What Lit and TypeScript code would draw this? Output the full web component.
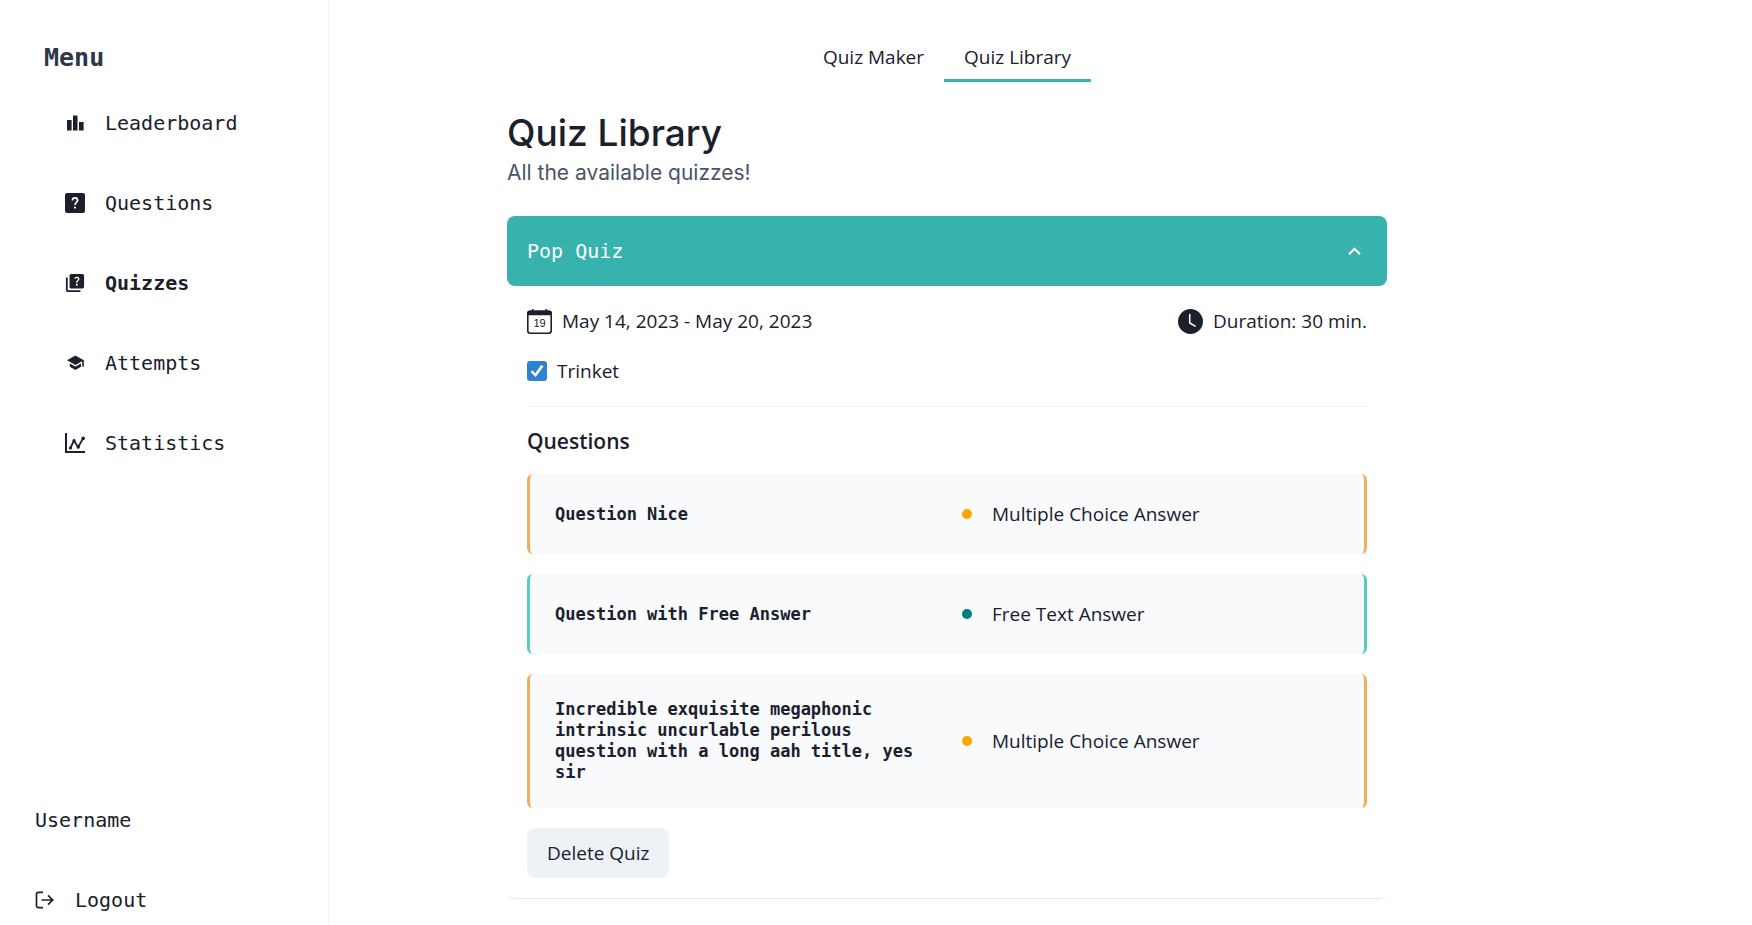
import { LitElement, html, css, svg } from "lit";
import { customElement, property, state } from "lit/decorators.js";
import { classMap } from "lit/directives/class-map.js";

const glyphs = {
  leaderboard: svg`<svg viewBox="0 0 20 20"><path fill="currentColor" d="M2 7h4.600v10.600H2zM8 2.600h4.500v15H8zM14 9h4.600v8.600H14z"/></svg>`,
  questions: svg`<svg viewBox="0 0 20 20"><rect width="20" height="20" rx="2.200" fill="currentColor"/><path d="M7.400 7.400C7.400 5.800 8.500 4.800 10 4.800s2.600 1 2.600 2.400c0 1.900-2.600 2.300-2.600 4.800" fill="none" stroke="#fff" stroke-width="1.700"/><circle cx="10" cy="14.600" r="1.100" fill="#fff"/></svg>`,
  quizzes: svg`<svg viewBox="1 1 22 22"><path fill="currentColor" d="M4 6H2v14c0 1.1.9 2 2 2h14v-2H4V6z"/><path fill="currentColor" d="M20 2H8c-1.1 0-2 .9-2 2v12c0 1.1.9 2 2 2h12c1.1 0 2-.9 2-2V4c0-1.1-.9-2-2-2zm-5.990 13c-.59 0-1.050-.47-1.050-1.050 0-.59.47-1.040 1.050-1.040.59 0 1.040.45 1.040 1.040-.01.58-.45 1.050-1.040 1.050zm2.500-6.170c-.63.93-1.230 1.210-1.560 1.810-.13.24-.18.4-.18 1.180h-1.520c0-.41-.06-1.080.26-1.650.41-.73 1.180-1.160 1.630-1.800.48-.68.21-1.940-1.140-1.940-.88 0-1.320.67-1.500 1.230l-1.370-.57C11.510 5.960 12.520 5 13.990 5c1.230 0 2.080.56 2.510 1.260.37.6.58 1.730.01 2.570z"/></svg>`,
  attempts: svg`<svg viewBox="0 0 20 20"><path fill="currentColor" d="M10.400 2.600 2 7.300l8.400 4.700 6.800-3.800v5.600h1.600V7.300z"/><path fill="currentColor" d="M4.800 10.400v3.400l5.600 3.300 5.600-3.300v-3.400l-5.600 3.200z"/></svg>`,
  statistics: svg`<svg viewBox="0 0 20 20"><path fill="currentColor" d="M0 0h2v18h18v2H0z"/><path d="M5.400 15 9 7.500l4.200 6.800L18 5.400" fill="none" stroke="currentColor" stroke-width="1.800"/><g fill="currentColor"><circle cx="5.400" cy="15" r="1.600"/><circle cx="9" cy="7.700" r="1.600"/><circle cx="13.200" cy="14" r="1.700"/><circle cx="18.200" cy="5.400" r="1.800"/></g></svg>`,
  logout: svg`<svg viewBox="0 0 20 20"><path d="M8 2.300H3.500a2 2 0 0 0-2 2v11.400a2 2 0 0 0 2 2H8M6.500 10h11M13 5.300 17.700 10 13 14.700" fill="none" stroke="currentColor" stroke-width="1.700"/></svg>`,
  calendar: svg`<svg viewBox="0 0 25 25"><rect x=".8" y="2.300" width="23.400" height="21.900" rx="2.500" fill="none" stroke="currentColor" stroke-width="1.600"/><path fill="currentColor" d="M3 1.500h2V0h1.500v1.500h12V0H20v1.500h2a3 3 0 0 1 3 3v1.800H0V4.500a3 3 0 0 1 3-3z"/><text x="12.500" y="18" text-anchor="middle" font-family="Liberation Sans, sans-serif" font-size="11" fill="currentColor">19</text></svg>`,
  clock: svg`<svg viewBox="0 0 16 16"><path fill="currentColor" d="M16 8A8 8 0 1 1 0 8a8 8 0 0 1 16 0zM8 3.500a.5.5 0 0 0-1 0V9a.5.5 0 0 0 .252.434l3.500 2a.5.5 0 0 0 .496-.868L8 8.710V3.500z"/></svg>`,
  chevron: svg`<svg viewBox="0 0 24 24"><path fill="currentColor" d="M12 8l-6 6 1.410 1.410L12 10.830l4.590 4.580L18 14z"/></svg>`,
};
type Glyph = keyof typeof glyphs;

@customElement("app-icon")
class AppIcon extends LitElement {
  @property() name: Glyph = "quizzes";
  static styles = css`
    :host {
      display: block;
      flex: none;
      width: 20px;
      height: 20px;
    }
    svg {
      display: block;
      width: 100%;
      height: 100%;
    }
  `;
  render() {
    return glyphs[this.name];
  }
}

@customElement("side-menu")
class SideMenu extends LitElement {
  static styles = css`
    :host {
      box-sizing: border-box;
      display: flex;
      flex-direction: column;
      padding: 40px 20px 5px 35px;
      border-right: 1px solid #edf2f7;
      font: 20px/40px "DejaVu Sans Mono", monospace;
      color: #1a202c;
    }
    h2 {
      margin: 0;
      padding-left: 9px;
      font-size: 25px;
      line-height: 36px;
      font-weight: 700;
      color: #2d3748;
    }
    .links {
      display: flex;
      flex-direction: column;
      gap: 40px;
      padding: 27px 0 40px 30px;
    }
    .account {
      display: flex;
      flex-direction: column;
      gap: 40px;
      margin-top: auto;
    }
    a {
      display: flex;
      align-items: center;
      gap: 20px;
      color: inherit;
      text-decoration: none;
    }
    .current {
      font-weight: 700;
    }
  `;
  private links: { icon: Glyph; label: string }[] = [
    { icon: "leaderboard", label: "Leaderboard" },
    { icon: "questions", label: "Questions" },
    { icon: "quizzes", label: "Quizzes" },
    { icon: "attempts", label: "Attempts" },
    { icon: "statistics", label: "Statistics" },
  ];
  render() {
    return html`
      <h2>Menu</h2>
      <nav class="links">
        ${this.links.map(
          (l) => html`<a href="#" class=${classMap({ current: l.label === "Quizzes" })}>
            <app-icon name=${l.icon}></app-icon>${l.label}
          </a>`
        )}
      </nav>
      <div class="account">
        <span>Username</span>
        <a href="#"><app-icon name="logout"></app-icon>Logout</a>
      </div>
    `;
  }
}

interface Question {
  title: string;
  kind: "choice" | "text";
}

const kindLabels = { choice: "Multiple Choice Answer", text: "Free Text Answer" };

@customElement("quiz-panel")
class QuizPanel extends LitElement {
  @property() name = "";
  @property({ attribute: false }) questions: Question[] = [];
  @state() private open = true;

  static styles = css`
    :host {
      display: block;
      border-bottom: 1px solid #e2e8f0;
      border-radius: 8px;
    }
    .header {
      box-sizing: border-box;
      display: flex;
      width: 100%;
      align-items: center;
      justify-content: space-between;
      padding: 20px;
      border: 0;
      border-radius: 8px;
      background: #38b2ac;
      color: #fff;
      font: 500 20px/30px "DejaVu Sans Mono", monospace;
      cursor: pointer;
    }
    .chevron {
      width: 25px;
      height: 25px;
    }
    .body {
      padding: 20px;
    }
    .row {
      display: flex;
      flex-wrap: wrap;
      justify-content: space-between;
    }
    .fact {
      display: flex;
      align-items: center;
      gap: 10px;
    }
    .fact app-icon {
      width: 25px;
      height: 25px;
    }
    .check {
      display: flex;
      align-items: center;
      gap: 10px;
      margin: 20px 0;
    }
    .check input {
      appearance: none;
      display: grid;
      place-content: center;
      width: 20px;
      height: 20px;
      margin: 0;
      border: 2px solid #e2e8f0;
      border-radius: 3px;
    }
    .check input:checked {
      border-color: #3182ce;
      background: #3182ce;
    }
    .check input:checked::after {
      content: "";
      width: 13px;
      height: 12px;
      background: #fff;
      clip-path: polygon(0 58%, 14% 44%, 36% 68%, 82% 0, 100% 12%, 40% 100%);
    }
    hr {
      margin: 0 0 19px;
      border: 0;
      border-top: 1px solid #edf0f3;
    }
    h3 {
      margin: 0 0 18px;
      font-size: 21px;
      line-height: 30px;
      font-weight: 600;
    }
    ul {
      display: flex;
      flex-direction: column;
      gap: 20px;
      margin: 0;
      padding: 0;
      list-style: none;
    }
    .question {
      display: grid;
      grid-template-columns: 1fr 1fr;
      align-items: center;
      gap: 30px;
      padding: 25px;
      border: 0 solid #f0ad5c;
      border-width: 0 3px;
      border-radius: 6px;
      background: #f8fafc;
    }
    .question.text {
      border-color: #58ccc0;
    }
    .title {
      font: 700 17px/21px "DejaVu Sans Mono", monospace;
    }
    .kind {
      display: flex;
      align-items: center;
      gap: 20px;
    }
    .dot {
      width: 10px;
      height: 10px;
      border-radius: 50%;
      background: #ffa500;
    }
    .text .dot {
      background: #008080;
    }
    .delete {
      margin-top: 20px;
      padding: 10px 20px;
      border: 0;
      border-radius: 8px;
      background: #edf2f7;
      color: inherit;
      font: inherit;
      font-weight: 500;
      cursor: pointer;
    }
  `;

  render() {
    return html`
      <button class="header" aria-expanded=${this.open} @click=${() => (this.open = !this.open)}>
        ${this.name}<app-icon class="chevron" name="chevron"></app-icon>
      </button>
      ${this.open ? this.renderBody() : ""}
    `;
  }

  private renderBody() {
    return html`<div class="body">
      <div class="row">
        <div class="fact"><app-icon name="calendar"></app-icon>May 14, 2023 - May 20, 2023</div>
        <div class="fact"><app-icon name="clock"></app-icon>Duration: 30 min.</div>
      </div>
      <label class="check"><input type="checkbox" checked />Trinket</label>
      <hr />
      <h3>Questions</h3>
      <ul>
        ${this.questions.map(
          (q) => html`<li class="question ${q.kind}">
            <div class="title">${q.title}</div>
            <div class="kind"><span class="dot"></span>${kindLabels[q.kind]}</div>
          </li>`
        )}
      </ul>
      <button class="delete">Delete Quiz</button>
    </div>`;
  }
}

@customElement("app-root")
class AppRoot extends LitElement {
  static styles = css`
    :host {
      display: grid;
      grid-template-columns: 329px minmax(0, 1fr);
      min-height: 100vh;
      background: #fff;
      color: #1a202c;
      font: 19px/30px "Open Sans", sans-serif;
    }
    main {
      padding: 32px 187px 26px 0;
    }
    .tabs {
      display: flex;
      justify-content: center;
    }
    .tab {
      padding: 10px 20px 7px;
      border: 0;
      border-bottom: 3px solid transparent;
      background: none;
      color: inherit;
      font: inherit;
      cursor: pointer;
    }
    .tab.selected {
      border-color: #38b2ac;
    }
    .content {
      max-width: 880px;
      margin: 0 auto;
      padding-top: 26px;
    }
    h1 {
      margin: 0;
      font: 500 37px/50px Inter, sans-serif;
    }
    .lead {
      margin: 0 0 28px;
      font: 21px/30px Inter, sans-serif;
      color: #4a5568;
    }
  `;
  @state() private tab = "Quiz Library";
  private questions: Question[] = [
    { title: "Question Nice", kind: "choice" },
    { title: "Question with Free Answer", kind: "text" },
    {
      title: "Incredible exquisite megaphonic intrinsic uncurlable perilous question with a long aah title, yes sir",
      kind: "choice",
    },
  ];
  render() {
    return html`
      <side-menu></side-menu>
      <main>
        <div class="tabs" role="tablist">
          ${["Quiz Maker", "Quiz Library"].map(
            (t) => html`<button
              role="tab"
              aria-selected=${t === this.tab}
              class=${classMap({ tab: true, selected: t === this.tab })}
              @click=${() => (this.tab = t)}
            >${t}</button>`
          )}
        </div>
        <div class="content">
          <h1>Quiz Library</h1>
          <p class="lead">All the available quizzes!</p>
          <quiz-panel name="Pop Quiz" .questions=${this.questions}></quiz-panel>
        </div>
      </main>
    `;
  }
}
